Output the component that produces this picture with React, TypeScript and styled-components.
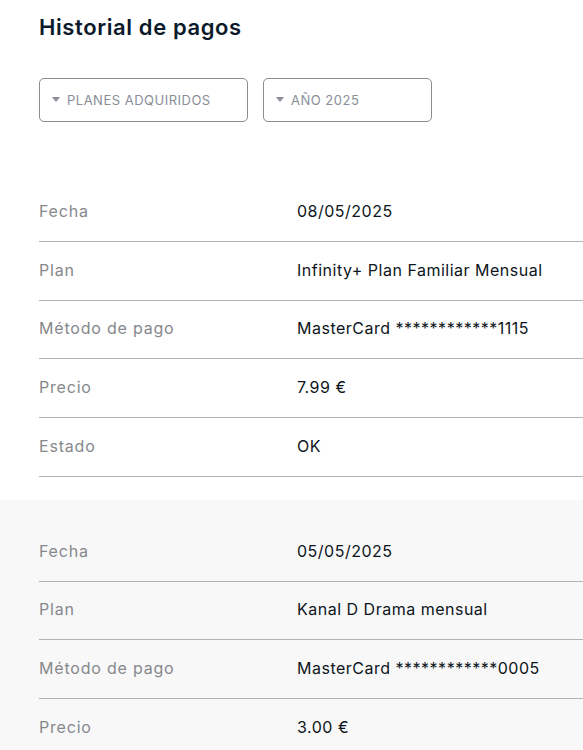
import React from 'react';
import styled, { createGlobalStyle } from 'styled-components';

const GlobalStyle = createGlobalStyle`
    body {
        margin: 0;
        background: #ffffff;
        font-family: Inter, "Noto Sans", sans-serif;
        overflow: hidden;
    }
`;

const Page = styled.main`
    width: 583px;
`;

const Header = styled.header`
    padding: 12px 0 0 39px;
`;

const Title = styled.h1`
    margin: 0;
    font-size: 22px;
    line-height: 30px;
    font-weight: 600;
    color: #0b1a2a;
    letter-spacing: 0.6px;
`;

const Filters = styled.div`
    display: flex;
    gap: 15px;
    margin-top: 36px;
`;

const Select = styled.button<{ $width: number }>`
    display: flex;
    align-items: center;
    gap: 7px;
    width: ${p => p.$width}px;
    height: 44px;
    padding: 0 0 0 12px;
    background: #fff;
    border: 1px solid #8c8c8c;
    border-radius: 5px;
    font-family: inherit;
    font-size: 13px;
    color: #8a8e99;
    text-transform: uppercase;
    letter-spacing: 0.5px;
    cursor: pointer;
`;

const Caret = styled.span`
    width: 0;
    height: 0;
    border-left: 4.5px solid transparent;
    border-right: 4.5px solid transparent;
    border-top: 5px solid #8a8e99;
    margin-top: -2px;
`;

const Payments = styled.div`
    margin-top: 38px;
`;

const Card = styled.section<{ $shaded: boolean }>`
    padding: 23px 0 23px 39px;
    background: ${p => (p.$shaded ? '#f8f8f8' : '#ffffff')};
`;

const Row = styled.div`
    display: grid;
    grid-template-columns: 258px 1fr;
    align-items: center;
    height: 58.75px;
    border-bottom: 1px solid #b3b3b3;
    box-sizing: border-box;
    padding-bottom: 2px;
    font-size: 16px;
`;

const Label = styled.span`
    color: #86888c;
    letter-spacing: 0.8px;
`;

const Value = styled.span`
    color: #0d1520;
    letter-spacing: 0.5px;
`;

type Payment = {
    fecha: string;
    plan: string;
    metodo: string;
    precio: string;
    estado: string;
};

const payments: Payment[] = [
    {
        fecha: '08/05/2025',
        plan: 'Infinity+ Plan Familiar Mensual',
        metodo: 'MasterCard ************1115',
        precio: '7.99 €',
        estado: 'OK',
    },
    {
        fecha: '05/05/2025',
        plan: 'Kanal D Drama mensual',
        metodo: 'MasterCard ************0005',
        precio: '3.00 €',
        estado: 'OK',
    },
];

const PaymentCard = ({ payment, shaded }: { payment: Payment; shaded: boolean }) => (
    <Card $shaded={shaded}>
        <Row>
            <Label>Fecha</Label>
            <Value>{payment.fecha}</Value>
        </Row>
        <Row>
            <Label>Plan</Label>
            <Value>{payment.plan}</Value>
        </Row>
        <Row>
            <Label>Método de pago</Label>
            <Value>{payment.metodo}</Value>
        </Row>
        <Row>
            <Label>Precio</Label>
            <Value>{payment.precio}</Value>
        </Row>
        <Row>
            <Label>Estado</Label>
            <Value>{payment.estado}</Value>
        </Row>
    </Card>
);

const App = () => (
    <Page>
        <GlobalStyle />
        <Header>
            <Title>Historial de pagos</Title>
            <Filters>
                <Select $width={209}>
                    <Caret />
                    Planes adquiridos
                </Select>
                <Select $width={169}>
                    <Caret />
                    Año 2025
                </Select>
            </Filters>
        </Header>
        <Payments>
            {payments.map((p, i) => (
                <PaymentCard key={p.fecha} payment={p} shaded={i % 2 === 1} />
            ))}
        </Payments>
    </Page>
);

export default App;
